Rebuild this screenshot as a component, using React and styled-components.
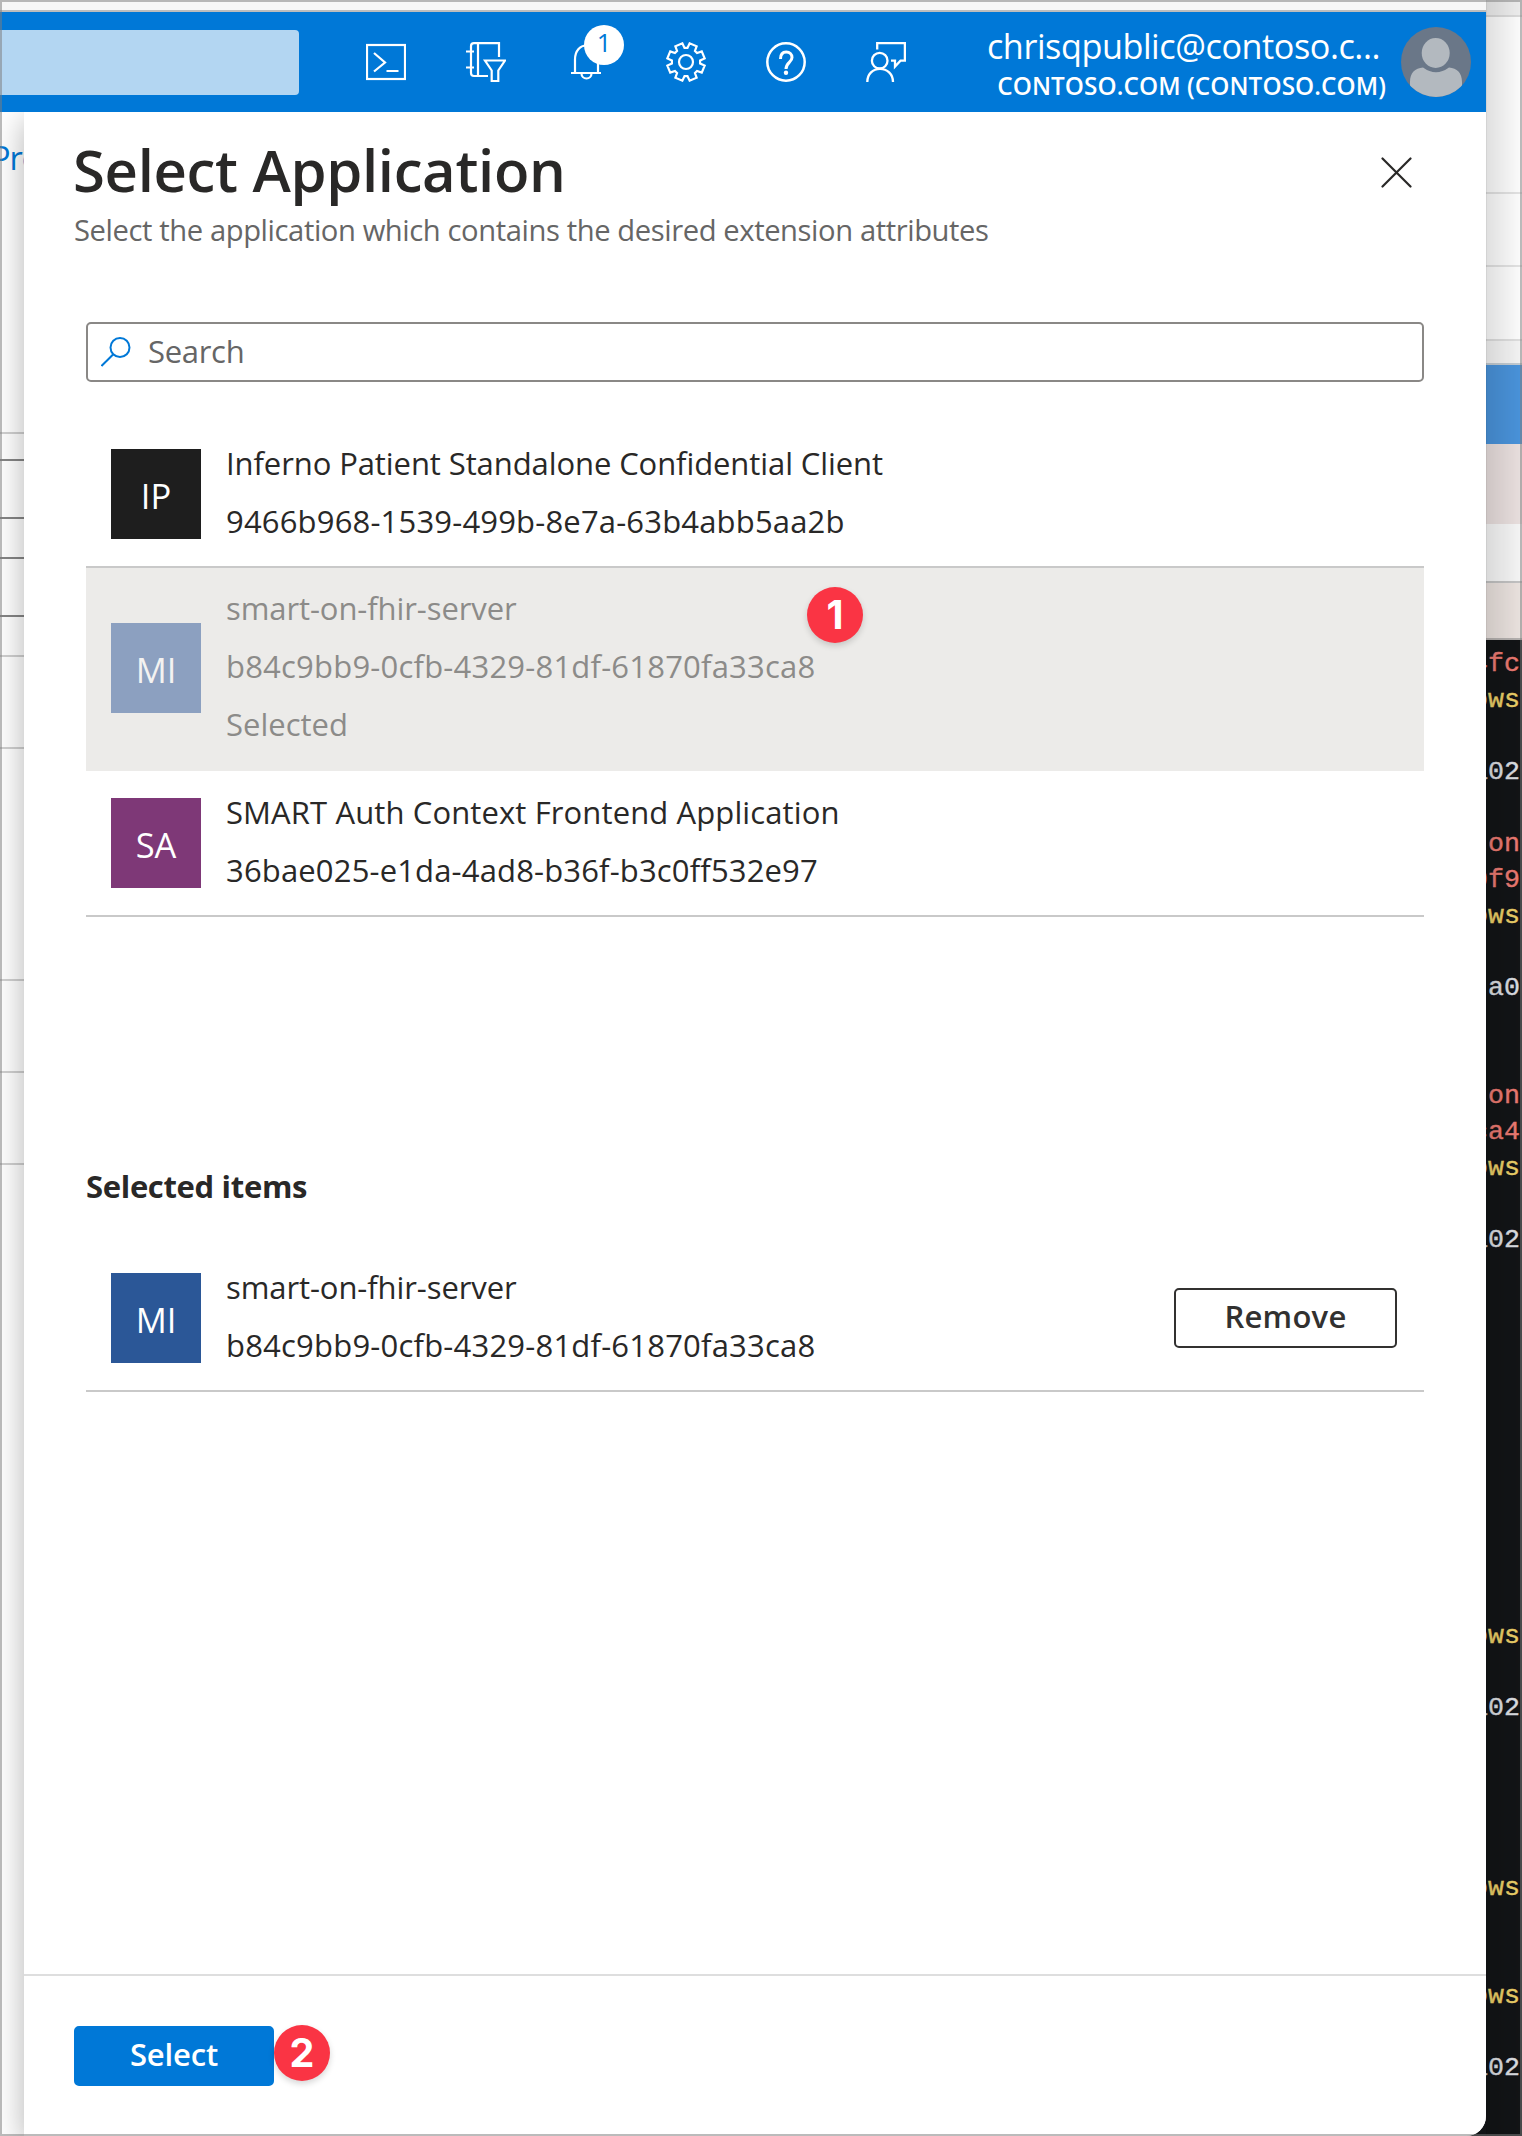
import React from "react";
import styled, { createGlobalStyle } from "styled-components";

const Global = createGlobalStyle`
  *, *::before, *::after { box-sizing: border-box; }
  html, body { margin: 0; padding: 0; }
  body { font-family: "Open Sans", "Noto Sans", sans-serif; color: #292827; }
`;

const Page = styled.div`
  position: relative;
  display: flex;
  width: 1522px;
  height: 2136px;
  overflow: hidden;
  background: #121416;
`;

const PageEdge = styled.div`
  position: absolute;
  inset: 0;
  z-index: 5;
  border: 2px solid rgba(125, 125, 125, 0.52);
  pointer-events: none;
`;

const Window = styled.div`
  display: flex;
  flex-direction: column;
  width: 1486px;
  height: 2136px;
  overflow: hidden;
  background: #fff;
  border-radius: 0 0 20px 0;
`;

const BrowserEdge = styled.div`
  flex: none;
  height: 12px;
  background: #f7f7f7;
  border-bottom: 2px solid #bdbdbd;
`;

const TopBar = styled.header`
  position: relative;
  z-index: 2;
  flex: none;
  display: flex;
  align-items: center;
  height: 100px;
  background: #0078d7;
  color: #fff;
`;

const GlobalSearch = styled.div`
  width: 299px;
  height: 65px;
  background: #b3d6f2;
  border-radius: 0 4px 4px 0;
`;

const Tools = styled.nav`
  display: flex;
  gap: 60px;
  margin-left: 67px;
`;

const Tool = styled.div`
  position: relative;
  width: 40px;
  height: 40px;
  svg { display: block; }
`;

const Count = styled.span`
  position: absolute;
  left: 18px;
  top: -17px;
  width: 40px;
  height: 40px;
  border-radius: 50%;
  background: #fff;
  color: #0078d7;
  font-size: 25.6px;
  line-height: 36px;
  text-align: center;
`;

const Account = styled.div`
  display: flex;
  align-items: center;
  margin-left: auto;
  margin-right: 15px;
  gap: 14px;
`;

const AccountText = styled.div`
  display: flex;
  flex-direction: column;
  align-items: flex-end;
  white-space: nowrap;
`;

const Email = styled.span`
  margin-right: 7px;
  font-size: 34.2px;
  line-height: 46px;
  letter-spacing: -0.44px;
`;

const Tenant = styled.span`
  margin-right: 1px;
  padding-top: 2px;
  font-size: 24.3px;
  font-weight: 600;
  line-height: 30px;
  letter-spacing: 0.087px;
`;

const Body = styled.div`
  flex: 1;
  display: flex;
  min-height: 0;
`;

const Gutter = styled.div`
  flex: none;
  width: 24px;
  overflow: hidden;
`;

const GutterLink = styled.div`
  height: 320px;
  padding-top: 23px;
  margin-left: -9px;
  color: #0078d7;
  font-size: 32.5px;
  line-height: 46px;
  letter-spacing: -1px;
  white-space: nowrap;
`;

const GutterRow = styled.div`
  height: ${(p) => p.$h}px;
  border-top: 2px solid ${(p) => (p.$strong ? "#858585" : "#d0d0d0")};
`;

const Panel = styled.section`
  flex: 1;
  display: flex;
  flex-direction: column;
  background: #fff;
  box-shadow: 0 8px 30px rgba(0, 0, 0, 0.3);
`;

const PanelHead = styled.div`
  display: flex;
  justify-content: space-between;
  height: 210px;
  padding: 21px 74px 0 50px;
`;

const Title = styled.h1`
  margin: 0 0 0 -1px;
  font-size: 58px;
  font-weight: 600;
  line-height: 74px;
  white-space: nowrap;
  letter-spacing: -0.33px;
`;

const Subtitle = styled.p`
  margin: 0;
  color: #666;
  font-size: 29.2px;
  line-height: 46px;
  white-space: nowrap;
  letter-spacing: -0.41px;
`;

const CloseIcon = styled.svg`
  margin-top: 24px;
`;

const PanelBody = styled.div`
  flex: 1;
  display: flex;
  flex-direction: column;
  padding: 0 62px;
`;

const SearchBox = styled.div`
  display: flex;
  align-items: center;
  gap: 15px;
  height: 60px;
  padding-left: 13px;
  border: 2px solid #8a8886;
  border-radius: 5px;
  color: #666;
`;

const SearchText = styled.span`
  padding-bottom: 2px;
  font-size: 31px;
  line-height: 52px;
  letter-spacing: -0.3px;
`;

const List = styled.div`
  margin-top: ${(p) => p.$top}px;
`;

const Row = styled.div`
  position: relative;
  display: flex;
  align-items: center;
  height: ${(p) => (p.$picked ? 203 : 146)}px;
  padding: 0 27px 0 25px;
  background: ${(p) => (p.$picked ? "#ecebe9" : "#fff")};
  color: ${(p) => (p.$picked ? "#8c8b89" : "#292827")};
  border-bottom: ${(p) => (p.$picked ? "3px solid #ecebe9" : "2px solid #c9c9c9")};
`;

const Initials = styled.div`
  width: 90px;
  height: 90px;
  background: ${(p) => p.$bg};
  color: ${(p) => (p.$dim ? "#f3f2f1" : "#fff")};
  font-size: 34.5px;
  line-height: 93px;
  text-align: center;
`;

const RowText = styled.div`
  align-self: flex-start;
  flex: 1;
  padding: ${(p) => (p.$picked ? 11 : 12)}px 0 0 25px;
`;

const Line = styled.div`
  font-size: 31px;
  line-height: 58px;
  white-space: nowrap;
  letter-spacing: ${(p) => p.$ls || 0}px;
`;

const Heading = styled.h2`
  margin: 243px 0 0;
  font-size: 31px;
  font-weight: 700;
  line-height: 52px;
  letter-spacing: -0.325px;
`;

const Button = styled.button`
  display: block;
  width: ${(p) => (p.$primary ? 200 : 223)}px;
  height: 60px;
  padding: 0 0 3px;
  border: 2px solid ${(p) => (p.$primary ? "#0078d7" : "#323130")};
  border-radius: 5px;
  background: ${(p) => (p.$primary ? "#0078d7" : "#fff")};
  color: ${(p) => (p.$primary ? "#fff" : "#323130")};
  font-family: inherit;
  font-size: 31px;
  font-weight: 600;
  line-height: 53px;
  letter-spacing: ${(p) => (p.$primary ? -0.16 : 0.25)}px;
`;

const Step = styled.span`
  position: absolute;
  left: ${(p) => p.$x}px;
  top: ${(p) => p.$y}px;
  width: 56px;
  height: 56px;
  border-radius: 50%;
  background: #fa3444;
  box-shadow: 0 3px 6px rgba(0, 0, 0, 0.16);
  color: #fff;
  font-family: Inter, sans-serif;
  font-size: 39.5px;
  font-weight: 700;
  line-height: 56px;
  text-align: center;
`;

const Footer = styled.footer`
  position: relative;
  height: 162px;
  padding: 50px 50px 0;
  border-top: 2px solid #dedede;
`;

const Behind = styled.aside`
  position: relative;
  width: 36px;
  overflow: hidden;
`;

const BehindShade = styled.div`
  position: absolute;
  inset: 0;
  border-left: 1px solid rgba(0, 0, 0, 0.16);
  background: linear-gradient(to right, rgba(0, 0, 0, 0.12), rgba(0, 0, 0, 0.01));
`;

const Slab = styled.div`
  height: ${(p) => p.$h}px;
  background: ${(p) => p.$bg};
  border-bottom: ${(p) => (p.$line ? `2px solid ${p.$line}` : "none")};
`;

const Terminal = styled.pre`
  margin: 6px 0 0 -14px;
  font-family: "Liberation Mono", monospace;
  font-size: 26.6px;
  line-height: 36px;
  -webkit-text-stroke: 0.4px currentColor;
`;

const Output = styled.div`
  height: 36px;
  color: ${(p) => p.$c};
`;

const gearPath = (() => {
  const pts = [];
  const at = (deg, r) => {
    const a = ((deg - 90) * Math.PI) / 180;
    pts.push(`${(20 + r * Math.cos(a)).toFixed(2)} ${(20 + r * Math.sin(a)).toFixed(2)}`);
  };
  for (let k = 0; k < 8; k += 1) {
    const base = k * 45;
    at(base - 6, 14.2);
    at(base + 6, 14.2);
    at(base + 11, 19);
    at(base + 34, 19);
  }
  return `M${pts.join("L")}Z`;
})();

const Glyph = ({ children, w = 2.2 }) => (
  <svg width="40" height="40" viewBox="0 0 40 40" fill="none" stroke="#fff" strokeWidth={w}>
    {children}
  </svg>
);

const gutterRows = [
  [27, 0], [58, 1], [40, 1], [58, 1], [40, 1], [92, 0], [232, 0], [92, 0], [92, 0], [100, 0],
];

const slabs = [
  [17, "#f0f0f0", "#dcdcdc"], [177, "#fff", "#e4e4e4"], [73, "#fff", "#e4e4e4"], [74, "#fff", "#e0e0e0"],
  [24, "#f6f6f6", "#c4cdd4"], [79, "#4a94dc"], [80, "#ebe1e0"], [59, "#f8f8f8", "#c4c4c4"], [57, "#ece4e0", "#b6b2b0"],
];

const red = "#ec7a72";
const gold = "#ecd068";
const pale = "#dcdfe2";
const output = {
  0: ["4fc", red], 1: ["ows", gold], 3: ["a02", pale], 5: ["ton", red], 6: ["0f9", red], 7: ["ows", gold],
  9: ["-a0", pale], 12: ["ton", red], 13: ["ca4", red], 14: ["ows", gold], 16: ["a02", pale], 27: ["ows", gold],
  29: ["a02", pale], 34: ["ows", gold], 37: ["ows", gold], 39: ["a02", pale],
};

export default function App() {
  return (
    <Page>
      <Global />
      <Window>
        <BrowserEdge />
        <TopBar>
          <GlobalSearch />
          <Tools>
            <Tool>
              <Glyph w={2.2}>
                <rect x="1" y="3" width="38" height="34" />
                <path d="M8 11l11 9.5L8 29.5M20.5 29H32.5" />
              </Glyph>
            </Tool>
            <Tool>
              <Glyph w={2.2}>
                <path d="M33 15V1.100H8Q5 1.100 5 4V31Q5 34 8 34H22M12 1V34M0 9.500H8M0 25.500H8" />
                <path d="M19 18.500H39L32.300 28.500V39H25.700V28.500Z" />
              </Glyph>
            </Tool>
            <Tool>
              <Glyph w={2.2}>
                <path d="M9 31V17.500C9 9 14 3.500 20.500 3.500S32 9 32 17.500V31M5 31H35M15.500 31.500a5 5 0 0 0 10 0" />
              </Glyph>
              <Count>1</Count>
            </Tool>
            <Tool>
              <Glyph w={2.2}>
                <path d={gearPath} />
                <circle cx="20" cy="20" r="7" />
              </Glyph>
            </Tool>
            <Tool>
              <Glyph w={2.5}>
                <circle cx="20" cy="20" r="18.700" />
                <path d="M14.500 17C14.500 12.500 16.700 10 20.200 10S26 12.300 26 15.500C26 20.500 20 20.500 20 27" strokeWidth="3" />
                <circle cx="20" cy="30.800" r="2.200" fill="#fff" stroke="none" />
              </Glyph>
            </Tool>
            <Tool>
              <Glyph w={2.3}>
                <path d="M11.200 7.500V1.100H38.900V18.700H34.500L29 24.500V18.700H25" />
                <circle cx="13.700" cy="18.700" r="7.800" />
                <path d="M1.300 40C1.300 32 7 26.800 14 26.800S27 32 27 40" />
              </Glyph>
            </Tool>
          </Tools>
          <Account>
            <AccountText>
              <Email>chrisqpublic@contoso.c...</Email>
              <Tenant>CONTOSO.COM (CONTOSO.COM)</Tenant>
            </AccountText>
            <svg width="70" height="70" viewBox="0 0 70 70">
              <clipPath id="face"><circle cx="35" cy="35" r="35" /></clipPath>
              <g clipPath="url(#face)">
                <rect width="70" height="70" fill="#6a7788" />
                <path d="M9 72V55C9 46 14 41 22 40.500Q35 50 48 40.500C56 41 61 46 61 55V72Z" fill="#b3b9bf" />
                <ellipse cx="34.700" cy="26" rx="14" ry="15" fill="#b3b9bf" />
              </g>
            </svg>
          </Account>
        </TopBar>
        <Body>
          <Gutter>
            <GutterLink>Pre</GutterLink>
            {gutterRows.map(([h, strong], i) => <GutterRow key={i} $h={h} $strong={strong} />)}
          </Gutter>
          <Panel>
            <PanelHead>
              <div>
                <Title>Select Application</Title>
                <Subtitle>Select the application which contains the desired extension attributes</Subtitle>
              </div>
              <CloseIcon width="31" height="31" viewBox="0 0 31 31" stroke="#292827" strokeWidth="2.200" strokeLinecap="round">
                <path d="M1.500 1.500L29.500 29.500M29.500 1.500L1.500 29.500" />
              </CloseIcon>
            </PanelHead>
            <PanelBody>
              <SearchBox>
                <svg width="32" height="32" viewBox="0 0 32 32" fill="none" stroke="#0078d7" strokeWidth="2">
                  <circle cx="19" cy="11.500" r="9.500" />
                  <path d="M12.300 18.300L0.500 30" />
                </svg>
                <SearchText>Search</SearchText>
              </SearchBox>
              <List $top={40}>
                <Row>
                  <Initials $bg="#1e1e1e">IP</Initials>
                  <RowText>
                    <Line $ls={-0.089}>Inferno Patient Standalone Confidential Client</Line>
                    <Line $ls={0.178}>9466b968-1539-499b-8e7a-63b4abb5aa2b</Line>
                  </RowText>
                </Row>
                <Row $picked>
                  <Initials $bg="#8ca0c0" $dim>MI</Initials>
                  <RowText $picked>
                    <Line $ls={-0.088}>smart-on-fhir-server</Line>
                    <Line $ls={0.212}>b84c9bb9-0cfb-4329-81df-61870fa33ca8</Line>
                    <Line>Selected</Line>
                  </RowText>
                  <Step $x={721} $y={19}>1</Step>
                </Row>
                <Row>
                  <Initials $bg="#7e3877">SA</Initials>
                  <RowText>
                    <Line $ls={0.117}>SMART Auth Context Frontend Application</Line>
                    <Line $ls={0.161}>36bae025-e1da-4ad8-b36f-b3c0ff532e97</Line>
                  </RowText>
                </Row>
              </List>
              <Heading>Selected items</Heading>
              <List $top={34}>
                <Row>
                  <Initials $bg="#2b5797">MI</Initials>
                  <RowText>
                    <Line $ls={-0.088}>smart-on-fhir-server</Line>
                    <Line $ls={0.212}>b84c9bb9-0cfb-4329-81df-61870fa33ca8</Line>
                  </RowText>
                  <Button>Remove</Button>
                </Row>
              </List>
            </PanelBody>
            <Footer>
              <Button $primary>Select</Button>
              <Step $x={250} $y={49}>2</Step>
            </Footer>
          </Panel>
        </Body>
      </Window>
      <Behind>
        {slabs.map(([h, bg, line], i) => <Slab key={i} $h={h} $bg={bg} $line={line} />)}
        <Terminal>
          {Array.from({ length: 40 }, (_, i) => {
            const [text, color] = output[i] || ["", pale];
            return <Output key={i} $c={color}>{text}</Output>;
          })}
        </Terminal>
        <BehindShade />
      </Behind>
      <PageEdge />
    </Page>
  );
}
